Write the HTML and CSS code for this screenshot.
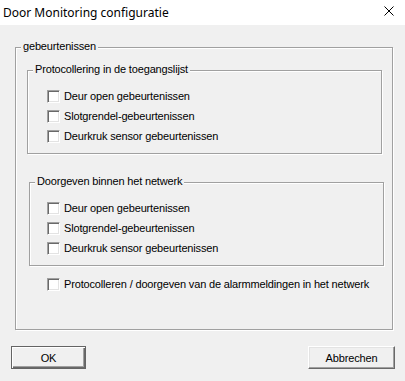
FILE: index.html
```html
<!DOCTYPE html>
<html lang="nl">
<head>
  <meta charset="UTF-8">
  <title>Door Monitoring configuratie</title>
  <link rel="stylesheet" href="styles.css">
</head>
<body>
  <div class="titlebar">
    <span class="title">Door Monitoring configuratie</span>
    <button class="close-btn" aria-label="Sluiten">
      <svg width="10" height="10" viewBox="0 0 10 10"><path d="M0.5 0.5L9.5 9.5M9.5 0.5L0.5 9.5" stroke="#000" stroke-width="1"/></svg>
    </button>
  </div>

  <div class="dialog">
    <div class="group outer">
      <span class="group-label">gebeurtenissen</span>

      <div class="group inner log">
        <span class="group-label">Protocollering in de toegangslijst</span>
        <label class="check-row"><input type="checkbox" class="check"> Deur open gebeurtenissen</label>
        <label class="check-row"><input type="checkbox" class="check"> Slotgrendel-gebeurtenissen</label>
        <label class="check-row"><input type="checkbox" class="check"> Deurkruk sensor gebeurtenissen</label>
      </div>

      <div class="group inner forward">
        <span class="group-label">Doorgeven binnen het netwerk</span>
        <label class="check-row"><input type="checkbox" class="check"> Deur open gebeurtenissen</label>
        <label class="check-row"><input type="checkbox" class="check"> Slotgrendel-gebeurtenissen</label>
        <label class="check-row"><input type="checkbox" class="check"> Deurkruk sensor gebeurtenissen</label>
      </div>

      <label class="check-row alarm"><input type="checkbox" class="check"> Protocolleren / doorgeven van de alarmmeldingen in het netwerk</label>
    </div>

    <div class="buttons">
      <button class="btn btn-default">OK</button>
      <button class="btn btn-cancel">Abbrechen</button>
    </div>
  </div>
</body>
</html>
```

FILE: styles.css
```css
:root {
  --face: #f0f0f0;
  --etch-dark: #a0a0a0;
  --etch-light: #ffffff;
  --text: #000000;
}

body {
  margin: 0;
  background: var(--face);
  color: var(--text);
  font-family: "Liberation Sans", Arial, sans-serif;
  font-size: 11px;
  letter-spacing: -0.16px;
}

/* Title bar */
.titlebar {
  height: 25px;
  background: #fff;
  display: flex;
  align-items: center;
  justify-content: space-between;
  padding-left: 3px;
}

.title {
  font-family: "Noto Sans", sans-serif;
  font-size: 12px;
  letter-spacing: 0;
  margin-top: -1px;
}

.close-btn {
  background: none;
  border: 0;
  padding: 0;
  margin-right: 11px;
  width: 10px;
  height: 10px;
  display: flex;
  margin-top: -3px;
}

/* Group boxes */
.dialog {
  padding-top: 22px;
}

.group {
  position: relative;
  border: 1px solid var(--etch-dark);
  box-shadow: inset 1px 1px 0 var(--etch-light), 1px 1px 0 var(--etch-light);
  display: flex;
  flex-direction: column;
  gap: 7px;
}

.group-label {
  position: absolute;
  top: -8px;
  left: 5px;
  padding: 0 2px;
  line-height: 13px;
  background: var(--face);
  white-space: nowrap;
}

.outer {
  margin: 0 12px 0 15px;
  padding: 22px 0 38px;
  gap: 0;
}

.inner {
  padding: 19px 0 10px 19px;
}

.log {
  margin: 0 10px 0 11px;
}

.forward {
  margin: 28px 8px 0 13px;
  padding-left: 17px;
}

/* Checkboxes */
.check-row {
  display: flex;
  align-items: center;
  gap: 4px;
  height: 13px;
  line-height: 13px;
}

.check {
  appearance: none;
  width: 13px;
  height: 13px;
  margin: 0;
  background: #fff;
  border: 1px solid;
  border-color: #a0a0a0 #fff #fff #a0a0a0;
  box-shadow: inset 1px 1px 0 #696969, inset -1px -1px 0 #e3e3e3;
}

.alarm {
  margin: 12px 0 0 31px;
}

/* Buttons */
.buttons {
  display: flex;
  justify-content: space-between;
  padding: 0 10px 0 11px;
  margin-top: 16px;
}

.btn {
  height: 23px;
  font-family: inherit;
  font-size: 11px;
  letter-spacing: inherit;
  color: var(--text);
  background: var(--face);
  padding: 0;
}

.btn-default {
  width: 75px;
  border: 1px solid #646464;
  box-shadow: inset 1px 1px 0 #fff, inset -1px -1px 0 #696969, inset -2px -2px 0 #a0a0a0;
}

.btn-cancel {
  width: 87px;
  border: 1px solid;
  border-color: #fff #696969 #696969 #fff;
  box-shadow: inset -1px -1px 0 #a0a0a0, inset 1px 1px 0 #e3e3e3;
}
```
